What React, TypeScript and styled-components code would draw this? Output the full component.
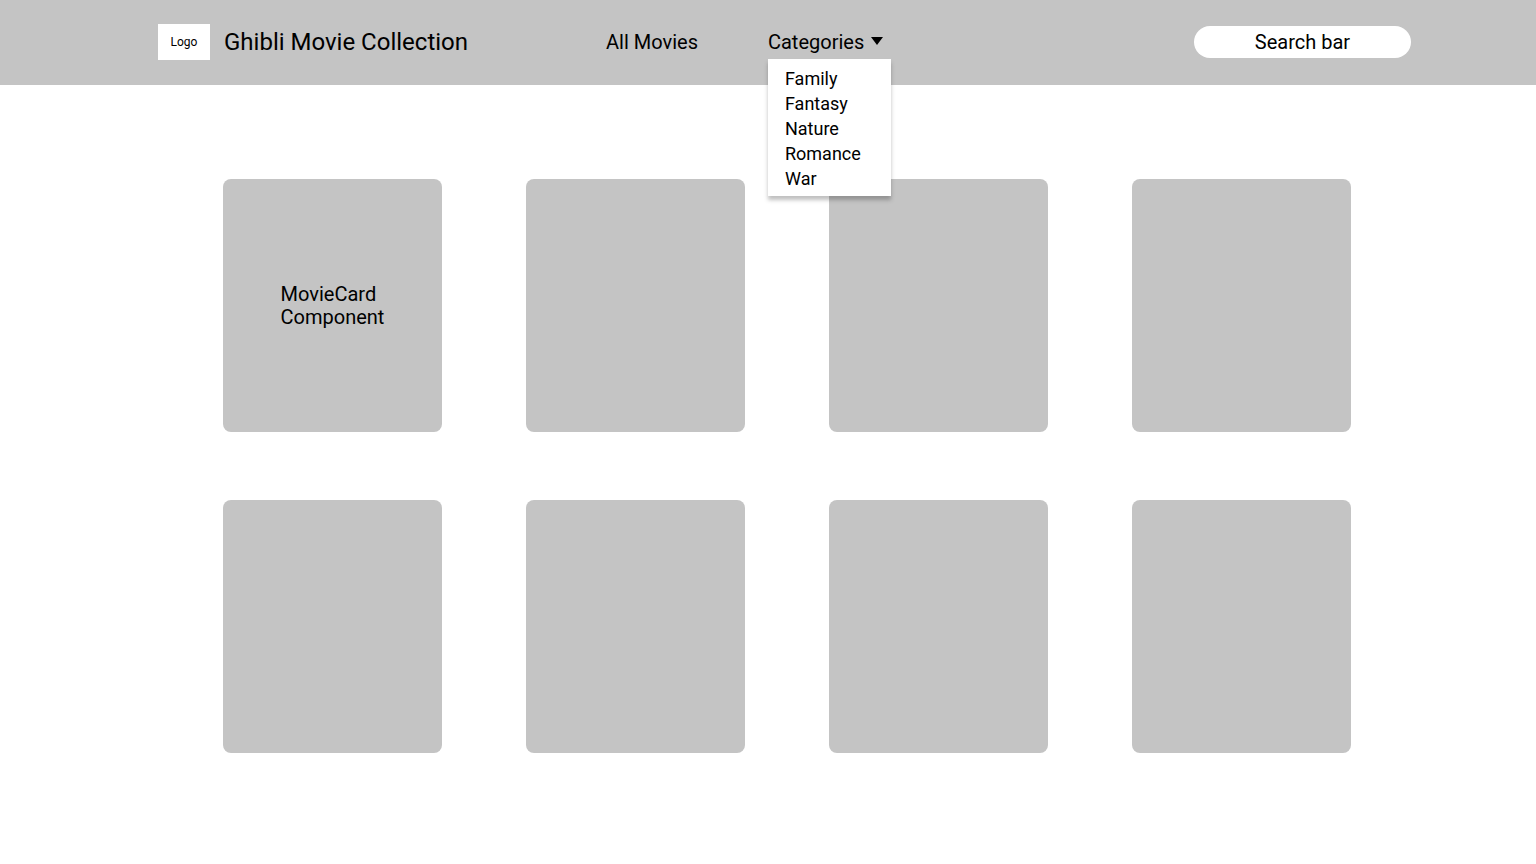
import styled, { createGlobalStyle } from 'styled-components';

const GlobalStyle = createGlobalStyle`
    body {
        margin: 0;
        background: #ffffff;
        font-family: Roboto, "Liberation Sans", sans-serif;
        color: #000;
    }
`;

const categories = ['Family', 'Fantasy', 'Nature', 'Romance', 'War'];

const App = () => {
    return (
        <>
            <GlobalStyle />
            <Header>
                <Brand>
                    <LogoBox>Logo</LogoBox>
                    <Title>Ghibli Movie Collection</Title>
                </Brand>
                <Nav>
                    <NavLink>All Movies</NavLink>
                    <Dropdown>
                        <NavLink>
                            Categories
                            <svg width="12" height="9" viewBox="0 0 12 9">
                                <polygon points="0,0 12,0 6,8" fill="#000" />
                            </svg>
                        </NavLink>
                        <Menu>
                            {categories.map((c) => (
                                <MenuItem key={c}>{c}</MenuItem>
                            ))}
                        </Menu>
                    </Dropdown>
                </Nav>
                <SearchBar>Search bar</SearchBar>
            </Header>
            <Grid>
                {Array.from({ length: 8 }).map((_, i) => (
                    <Card key={i}>
                        {i === 0 && <CardLabel>MovieCard<br />Component</CardLabel>}
                    </Card>
                ))}
            </Grid>
        </>
    );
};

export default App;

const Header = styled.header`
    display: flex;
    align-items: center;
    height: 85px;
    padding: 0 125px 2px 158px;
    background: #c4c4c4;
    box-sizing: border-box;
`;

const Brand = styled.div`
    display: flex;
    align-items: center;
    gap: 14px;
`;

const LogoBox = styled.div`
    width: 52px;
    height: 36px;
    background: #fff;
    display: flex;
    align-items: center;
    justify-content: center;
    font-size: 12px;
`;

const Title = styled.h1`
    margin: 0;
    font-size: 24px;
    font-weight: 400;
`;

const Nav = styled.nav`
    display: flex;
    align-items: center;
    gap: 70px;
    margin-left: 138px;
`;

const NavLink = styled.div`
    display: flex;
    align-items: center;
    gap: 7px;
    font-size: 20px;
    cursor: pointer;
`;

const Dropdown = styled.div`
    position: relative;
`;

const Menu = styled.ul`
    position: absolute;
    top: 29px;
    left: 0;
    width: 123px;
    margin: 0;
    padding: 7px 0 5px 17px;
    box-sizing: border-box;
    list-style: none;
    background: #fff;
    box-shadow: 0 4px 4px rgba(0, 0, 0, 0.25);
    z-index: 10;
`;

const MenuItem = styled.li`
    font-size: 18px;
    line-height: 25px;
`;

const SearchBar = styled.div`
    margin-left: auto;
    width: 217px;
    height: 32px;
    border-radius: 16px;
    background: #fff;
    display: flex;
    align-items: center;
    justify-content: center;
    font-size: 20px;
`;

const Grid = styled.main`
    display: grid;
    grid-template-columns: repeat(4, 219px);
    column-gap: 84px;
    row-gap: 68px;
    padding: 94px 0 0 223px;
`;

const Card = styled.div`
    height: 253px;
    border-radius: 8px;
    background: #c4c4c4;
    display: flex;
    align-items: center;
    justify-content: center;
`;

const CardLabel = styled.div`
    font-size: 20px;
    line-height: 23px;
`;
